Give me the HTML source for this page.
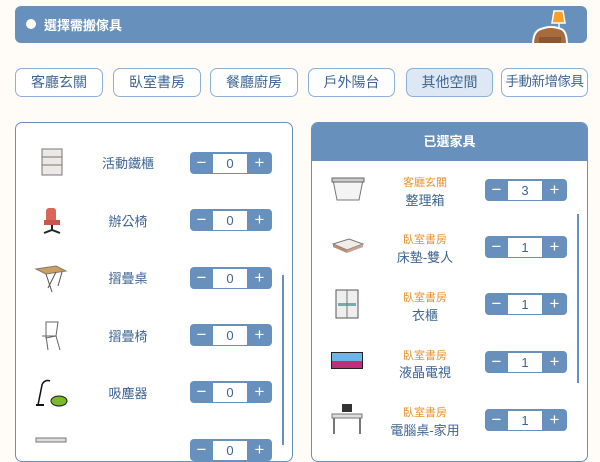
<!DOCTYPE html>
<html><head><meta charset="utf-8"><style>
*{box-sizing:border-box;margin:0;padding:0}
body{width:600px;height:444px;overflow:hidden;background:#fffcf7;font-family:"Liberation Sans","Noto Sans CJK TC",sans-serif;position:relative}
.hdr{position:absolute;left:15px;top:6px;width:572px;height:37px;background:#6790bd;border-radius:6px;overflow:hidden}
.hdr .dot{position:absolute;left:11px;top:13px;width:10px;height:10px;border-radius:50%;background:#fff}
.hdr .t{position:absolute;left:29px;top:9px;color:#fff;font-size:13px;font-weight:bold}
.tab{position:absolute;top:68px;height:29px;border:1.5px solid #8db0d6;border-radius:7px;background:#fff;color:#3d6494;font-size:14px;text-align:center;line-height:26px;white-space:nowrap}
.tab.on{background:#dde8f4}
.panel{position:absolute;top:122px;height:340px;border:1.5px solid #6790bd;border-radius:7px;background:#fff;overflow:hidden}
.rh{height:38px;background:#6790bd;color:#fff;font-size:13px;font-weight:bold;text-align:center;line-height:38px}
.st{position:absolute;width:82px;height:22px;background:#6790bd;border-radius:4px}
.st span{position:absolute;color:#fff;font-size:17px;line-height:22px;width:23px;text-align:center;top:0}
.st .v{position:absolute;left:23px;top:1.5px;width:34px;height:19px;background:#fff;color:#3d6494;font-size:13px;text-align:center;line-height:19px}
.lab{position:absolute;color:#3d6494;font-size:13px;text-align:center;width:100px}
.cat{position:absolute;color:#e8922a;font-size:11px;text-align:center;width:110px}
.nm{position:absolute;color:#3d6494;font-size:13px;text-align:center;width:110px}
.sb{position:absolute;width:2px;background:#6790bd}
.ic{position:absolute}
</style></head><body>
<div class="hdr"><div class="dot"></div><div class="t">選擇需搬傢具</div>
<svg style="position:absolute;left:516px;top:3px" width="44" height="34" viewBox="0 0 44 34"><rect x="27" y="14" width="2" height="20" fill="#ddd"/><polygon points="23,2 32,2 34,14 21,14" fill="#f7a028" stroke="#fff" stroke-width="1.5"/><path d="M2,36 Q2,22 10,20 Q20,16 30,20 Q36,22 36,36Z" fill="#a86b3c" stroke="#fff" stroke-width="2"/><rect x="8" y="28" width="22" height="7" fill="#8d5630"/></svg></div>
<div class="tab" style="left:15px;width:88px">客廳玄關</div>
<div class="tab" style="left:113px;width:88px">臥室書房</div>
<div class="tab" style="left:210px;width:88px">餐廳廚房</div>
<div class="tab" style="left:308px;width:87px">戶外陽台</div>
<div class="tab on" style="left:406px;width:87px">其他空間</div>
<div class="tab" style="left:501px;width:87px;font-size:13.5px;letter-spacing:-0.5px">手動新增傢具</div>

<div class="panel" style="left:15px;width:278px"></div>
<div class="panel" style="left:311px;width:277px"><div class="rh">已選家具</div></div>

<svg class="ic" style="left:38px;top:148px" width="28" height="30"><rect x="4" y="1" width="20" height="26" fill="#ece8e6" stroke="#777"/><line x1="4" y1="9" x2="24" y2="9" stroke="#777"/><line x1="4" y1="17" x2="24" y2="17" stroke="#777"/></svg>
<svg class="ic" style="left:38px;top:206px" width="28" height="30"><rect x="8" y="2" width="10" height="14" rx="3" fill="#d8645a"/><rect x="6" y="14" width="16" height="5" fill="#c8554c"/><path d="M14 19v5M6 27l8-3 8 3" stroke="#222" stroke-width="2" fill="none"/></svg>
<svg class="ic" style="left:34px;top:264px" width="34" height="32"><polygon points="2,5 22,2 32,7 12,10" fill="#c9a060" stroke="#876"/><path d="M12 10l6 18M22 8l-8 16M28 8l-4 14" stroke="#555" fill="none"/></svg>
<svg class="ic" style="left:38px;top:320px" width="28" height="32"><path d="M8 2l12 0-2 14-10 2zM4 16l14 0 4 14M8 16l2 14" stroke="#666" fill="#fff"/></svg>
<svg class="ic" style="left:36px;top:378px" width="32" height="30"><path d="M14 3a6 6 0 0 0-8 4l-4 20" stroke="#111" stroke-width="1.5" fill="none"/><ellipse cx="23" cy="23" rx="8" ry="5" fill="#7ab82c" stroke="#222"/><line x1="0" y1="27" x2="8" y2="27" stroke="#111" stroke-width="2"/></svg>
<svg class="ic" style="left:34px;top:436px" width="36" height="10"><rect x="2" y="2" width="30" height="4" fill="#ddd" stroke="#777"/></svg>

<div class="lab" style="left:78px;top:153px">活動鐵櫃</div>
<div class="lab" style="left:78px;top:211px">辦公椅</div>
<div class="lab" style="left:78px;top:268px">摺疊桌</div>
<div class="lab" style="left:78px;top:326px">摺疊椅</div>
<div class="lab" style="left:78px;top:383px">吸塵器</div>

<div class="st" style="left:190px;top:152px"><span style="left:0">−</span><div class="v">0</div><span style="left:58px">+</span></div>
<div class="st" style="left:190px;top:209px"><span style="left:0">−</span><div class="v">0</div><span style="left:58px">+</span></div>
<div class="st" style="left:190px;top:267px"><span style="left:0">−</span><div class="v">0</div><span style="left:58px">+</span></div>
<div class="st" style="left:190px;top:324px"><span style="left:0">−</span><div class="v">0</div><span style="left:58px">+</span></div>
<div class="st" style="left:190px;top:381px"><span style="left:0">−</span><div class="v">0</div><span style="left:58px">+</span></div>
<div class="st" style="left:190px;top:439px"><span style="left:0">−</span><div class="v">0</div><span style="left:58px">+</span></div>
<div class="sb" style="left:282px;top:275px;height:170px"></div>

<svg class="ic" style="left:331px;top:176px" width="34" height="26"><polygon points="2,4 32,4 28,24 6,24" fill="#f4f4f4" stroke="#777"/><rect x="1" y="2" width="32" height="4" fill="#ccc" stroke="#666"/></svg>
<svg class="ic" style="left:331px;top:236px" width="34" height="20"><polygon points="2,8 18,3 32,8 16,14" fill="#f0ece8" stroke="#777"/><polygon points="2,8 16,14 16,17 2,11" fill="#b98b7a"/><polygon points="16,14 32,8 32,11 16,17" fill="#c9a090"/></svg>
<svg class="ic" style="left:334px;top:288px" width="28" height="32"><rect x="2" y="2" width="22" height="28" fill="#eee" stroke="#555"/><rect x="4" y="15" width="18" height="3" fill="#7aa"/><line x1="13" y1="2" x2="13" y2="30" stroke="#777"/></svg>
<svg class="ic" style="left:330px;top:351px" width="34" height="22"><rect x="1" y="1" width="32" height="17" fill="#222"/><rect x="2" y="2" width="30" height="8" fill="#6fb4e8"/><rect x="2" y="10" width="30" height="7" fill="#c0307a"/></svg>
<svg class="ic" style="left:330px;top:402px" width="34" height="34"><rect x="12" y="2" width="10" height="8" fill="#333"/><rect x="2" y="12" width="30" height="4" fill="#ddd" stroke="#777"/><path d="M4 16v16M30 16v16" stroke="#777" stroke-width="2"/></svg>

<div class="cat" style="left:370px;top:174px">客廳玄關</div><div class="nm" style="left:370px;top:190px">整理箱</div>
<div class="cat" style="left:370px;top:231px">臥室書房</div><div class="nm" style="left:370px;top:247px">床墊-雙人</div>
<div class="cat" style="left:370px;top:289px">臥室書房</div><div class="nm" style="left:370px;top:305px">衣櫃</div>
<div class="cat" style="left:370px;top:347px">臥室書房</div><div class="nm" style="left:370px;top:362px">液晶電視</div>
<div class="cat" style="left:370px;top:404px">臥室書房</div><div class="nm" style="left:370px;top:420px">電腦桌-家用</div>

<div class="st" style="left:485px;top:179px"><span style="left:0">−</span><div class="v">3</div><span style="left:58px">+</span></div>
<div class="st" style="left:485px;top:236px"><span style="left:0">−</span><div class="v">1</div><span style="left:58px">+</span></div>
<div class="st" style="left:485px;top:293px"><span style="left:0">−</span><div class="v">1</div><span style="left:58px">+</span></div>
<div class="st" style="left:485px;top:351px"><span style="left:0">−</span><div class="v">1</div><span style="left:58px">+</span></div>
<div class="st" style="left:485px;top:409px"><span style="left:0">−</span><div class="v">1</div><span style="left:58px">+</span></div>
<div class="sb" style="left:577px;top:214px;height:169px"></div>
</body></html>
